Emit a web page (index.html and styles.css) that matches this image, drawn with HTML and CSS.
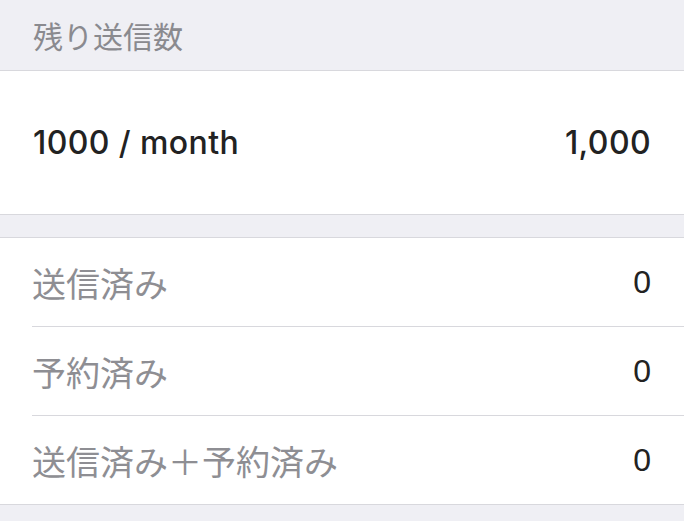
FILE: index.html
```html
<!DOCTYPE html>
<html lang="ja">
     <head>
          <meta charset="UTF-8" />
          <meta name="viewport" content="width=device-width, initial-scale=1.0" />
          <title>残り送信数</title>
          <link rel="stylesheet" href="styles.css">
     </head>
     <body>
          <div class="section-header">残り送信数</div>

          <div class="plan">
               <span class="plan-name">1000 / month</span>
               <span class="plan-value">1,000</span>
          </div>

          <div class="spacer"></div>

          <ul class="list">
               <li class="row">
                    <span class="label">送信済み</span>
                    <span class="value">0</span>
               </li>
               <li class="row">
                    <span class="label">予約済み</span>
                    <span class="value">0</span>
               </li>
               <li class="row">
                    <span class="label">送信済み＋予約済み</span>
                    <span class="value">0</span>
               </li>
          </ul>
     </body>
</html>
```

FILE: styles.css
```css
* {
     padding: 0;
     margin: 0;
     box-sizing: border-box;
}
body {
     background-color: #efeff4;
     font-family: "Liberation Sans", "Noto Sans CJK JP", sans-serif;
     color: #1c1c1e;
}
.section-header {
     height: 71px;
     border-bottom: 1px solid #d8d8dd;
     padding-left: 33px;
     display: flex;
     align-items: center;
     font-size: 30px;
     color: #8a8a8f;
}
.plan {
     height: 144px;
     background-color: #fff;
     border-bottom: 1px solid #d8d8dd;
     display: flex;
     align-items: center;
     justify-content: space-between;
     padding: 0 33px;
     font-family: Inter, "Liberation Sans", sans-serif;
     font-size: 32px;
     font-weight: 500;
     letter-spacing: 0.4px;
     color: #222;
}
.spacer {
     height: 22px;
}
.list {
     list-style-type: none;
     background-color: #fff;
     border-top: 1px solid #d8d8dd;
     border-bottom: 1px solid #d8d8dd;
     padding-left: 32px;
}
.row {
     height: 89px;
     display: flex;
     align-items: center;
     justify-content: space-between;
     padding-right: 33px;
     border-bottom: 1px solid #d8d8dd;
}
.row:last-child {
     border-bottom: none;
     height: 88px;
}
.label {
     font-size: 34px;
     color: #8e8e93;
}
.value {
     font-size: 32px;
     color: #222;
}
```
